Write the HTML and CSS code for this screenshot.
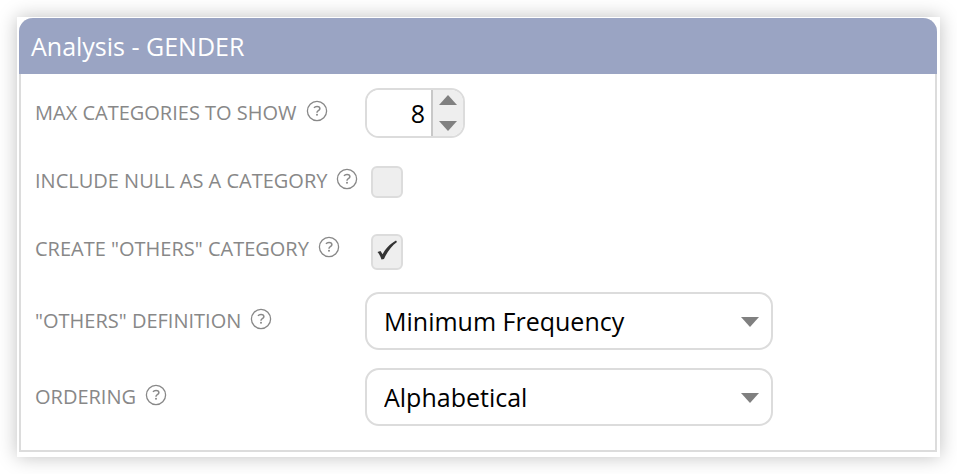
FILE: index.html
```html
<!DOCTYPE html>
<html lang="en">
<head>
    <meta charset="UTF-8">
    <meta name="viewport" content="width=device-width, initial-scale=1.0">
    <title>Analysis - GENDER</title>
    <link rel="stylesheet" href="styles.css">
</head>
<body>
    <svg class="defs" width="0" height="0" aria-hidden="true">
        <symbol id="icon-help" viewBox="0 0 22 22">
            <circle cx="11" cy="11" r="9.6" fill="none" stroke="currentColor" stroke-width="1.3"/>
            <path d="M8 7.9C8.6 7 9.7 6.5 11 6.5c1.8 0 2.9 0.9 2.9 2.2 0 1.9-2.9 2-2.9 3.7v0.3" fill="none" stroke="currentColor" stroke-width="1.5"/>
            <circle cx="11" cy="14.8" r="1" fill="currentColor"/>
        </symbol>
    </svg>

    <div class="container">
        <form class="panel">
            <h1 class="panel-title">Analysis - GENDER</h1>
            <div class="fields">
                <div class="field">
                    <div class="field-label">
                        <label for="maxCategories">MAX CATEGORIES TO SHOW</label>
                        <svg class="help"><use href="#icon-help"/></svg>
                    </div>
                    <div class="spinner">
                        <input type="number" id="maxCategories" value="8" min="1">
                        <div class="spinner-buttons">
                            <button type="button" class="step" id="stepUp" aria-label="Increase">
                                <svg class="arrow" viewBox="0 0 18 10"><path d="M0 10L9 0l9 10z"/></svg>
                            </button>
                            <button type="button" class="step" id="stepDown" aria-label="Decrease">
                                <svg class="arrow" viewBox="0 0 18 10"><path d="M0 0h18L9 10z"/></svg>
                            </button>
                        </div>
                    </div>
                </div>

                <div class="field">
                    <div class="field-label">
                        <label for="includeNull">INCLUDE NULL AS A CATEGORY</label>
                        <svg class="help"><use href="#icon-help"/></svg>
                    </div>
                    <div class="check">
                        <input type="checkbox" id="includeNull">
                    </div>
                </div>

                <div class="field">
                    <div class="field-label">
                        <label for="createOthers">CREATE "OTHERS" CATEGORY</label>
                        <svg class="help"><use href="#icon-help"/></svg>
                    </div>
                    <div class="check">
                        <input type="checkbox" id="createOthers" checked>
                        <svg class="tick" viewBox="0 0 22 22"><path d="M1.5 13L4.5 12 6.6 15.2C9.5 10 13.5 5 20 1.5L21 3C15.5 7 11 13 8 20L5.5 20.5C4.5 17.5 3.2 15 1.5 13z"/></svg>
                    </div>
                </div>

                <div class="field">
                    <div class="field-label">
                        <label for="othersDefinition">"OTHERS" DEFINITION</label>
                        <svg class="help"><use href="#icon-help"/></svg>
                    </div>
                    <div class="dropdown">
                        <select id="othersDefinition">
                            <option>Minimum Frequency</option>
                        </select>
                        <svg class="arrow" viewBox="0 0 18 10"><path d="M0 0h18L9 10z"/></svg>
                    </div>
                </div>

                <div class="field">
                    <div class="field-label">
                        <label for="ordering">ORDERING</label>
                        <svg class="help"><use href="#icon-help"/></svg>
                    </div>
                    <div class="dropdown">
                        <select id="ordering">
                            <option>Alphabetical</option>
                        </select>
                        <svg class="arrow" viewBox="0 0 18 10"><path d="M0 0h18L9 10z"/></svg>
                    </div>
                </div>
            </div>
        </form>
    </div>

    <script>
        const maxCategories = document.getElementById('maxCategories');

        document.getElementById('stepUp').addEventListener('click', () => {
            maxCategories.stepUp();
        });

        document.getElementById('stepDown').addEventListener('click', () => {
            maxCategories.stepDown();
        });
    </script>
</body>
</html>
```

FILE: styles.css
```css
* {
    margin: 0;
    padding: 0;
    box-sizing: border-box;
    font-family: 'Open Sans', sans-serif;
}

body {
    background-color: #fff;
    padding: 17px;
}

.defs {
    position: absolute;
}

.container {
    background: #fff;
    padding: 1px 3px 5px 2px;
    box-shadow: 0 0 18px rgba(0, 0, 0, 0.25);
}

.panel {
    border: 2px solid #dcdcdc;
    border-top: none;
    border-radius: 14px 14px 0 0;
}

.panel-title {
    margin: 0 -2px;
    padding: 0 12px;
    border-radius: 14px 14px 0 0;
    background: #9aa4c3;
    color: #fff;
    font-size: 25px;
    font-weight: 400;
    line-height: 56px;
}

.fields {
    display: flex;
    flex-direction: column;
    gap: 18px;
    padding: 14px 14px 24px;
}

.field {
    display: flex;
    align-items: center;
    min-height: 50px;
}

.field-label {
    flex: 0 0 330px;
    display: flex;
    align-items: center;
    gap: 9px;
    color: #888;
    font-size: 20px;
    line-height: 28px;
    white-space: nowrap;
}

.help {
    width: 22px;
    height: 22px;
    margin-bottom: 4px;
}

.arrow {
    width: 18px;
    height: 10px;
    fill: #808080;
}

/* number box */
.spinner {
    display: flex;
    width: 100px;
    height: 50px;
    border: 2px solid #dcdcdc;
    border-radius: 14px;
    overflow: hidden;
}

.spinner input {
    flex: 1;
    min-width: 0;
    padding-right: 6px;
    border: none;
    outline: none;
    font-size: 25px;
    text-align: right;
    appearance: textfield;
}

.spinner input::-webkit-inner-spin-button {
    appearance: none;
}

.spinner-buttons {
    display: flex;
    flex-direction: column;
    width: 32px;
    border-left: 2px solid #c8c8c8;
    background: #eee;
}

.step {
    flex: 1;
    display: flex;
    align-items: center;
    justify-content: center;
    border: none;
    background: none;
    cursor: pointer;
}

.step:first-child {
    padding-bottom: 3px;
}

.step:last-child {
    padding-top: 3px;
}

/* checkboxes */
.check {
    align-self: flex-start;
    display: grid;
    margin: 10px 6px 0;
}

.check input {
    grid-area: 1 / 1;
    appearance: none;
    width: 32px;
    height: 32px;
    border: 2px solid #dcdcdc;
    border-radius: 6px;
    background: #eee;
}

.check input:checked {
    height: 36px;
}

.tick {
    grid-area: 1 / 1;
    place-self: center;
    width: 22px;
    height: 22px;
    margin-bottom: 4px;
    fill: #333;
    pointer-events: none;
}

/* dropdowns */
.dropdown {
    flex: 0 1 408px;
    display: grid;
    align-items: center;
}

.dropdown select {
    grid-area: 1 / 1;
    appearance: none;
    width: 100%;
    height: 58px;
    padding: 0 40px 0 17px;
    border: 2px solid #dcdcdc;
    border-radius: 14px;
    background: #fff;
    color: #000;
    font-size: 25px;
}

.dropdown .arrow {
    grid-area: 1 / 1;
    justify-self: end;
    margin: 2px 14px 0 0;
    pointer-events: none;
}
```
